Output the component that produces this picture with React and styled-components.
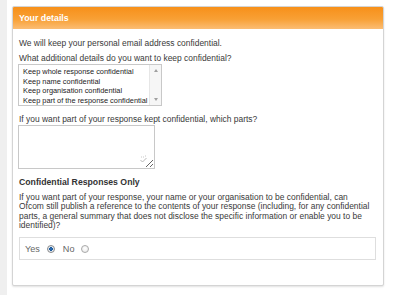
import React from 'react';
import styled, { createGlobalStyle } from 'styled-components';

const GlobalStyle = createGlobalStyle`
  html, body {
    margin: 0;
    padding: 0;
    background: #fff;
  }
  body {
    font-family: "Liberation Sans", Arial, sans-serif;
    color: #333;
  }
`;

const listOptions = [
  'Keep whole response confidential',
  'Keep name confidential',
  'Keep organisation confidential',
  'Keep part of the response confidential',
];

const App = () => {
  return (
    <>
      <GlobalStyle />
      <Page>
        <Panel>
          <PanelHeader>Your details</PanelHeader>
          <PanelBody>
            <Text>We will keep your personal email address confidential.</Text>
            <Text $mt={3}>What additional details do you want to keep confidential?</Text>
            <ListBox>
              <ListItems>
                {listOptions.map(opt => (
                  <ListItem key={opt}>{opt}</ListItem>
                ))}
              </ListItems>
              <ScrollTrack>
                <Arrow $up />
                <Arrow />
              </ScrollTrack>
            </ListBox>
            <Text $mt={7}>If you want part of your response kept confidential, which parts?</Text>
            <AreaWrap>
              <TextArea />
              <CheckIcon width="9" height="9" viewBox="0 0 9 9">
                <path d="M2 2h1M4 2h1M6 1h1" stroke="#c8c8c8" strokeWidth="1" />
                <path d="M1.5 5l2 2 4-4" fill="none" stroke="#b8b8b8" strokeWidth="1" />
              </CheckIcon>
            </AreaWrap>
            <Heading>Confidential Responses Only</Heading>
            <Paragraph>
              If you want part of your response, your name or your organisation to be confidential, can
              Ofcom still publish a reference to the contents of your response (including, for any confidential
              parts, a general summary that does not disclose the specific information or enable you to be
              identified)?
            </Paragraph>
            <RadioBox>
              <RadioLabel>Yes</RadioLabel>
              <Radio type="radio" name="publish" defaultChecked />
              <RadioLabel>No</RadioLabel>
              <Radio type="radio" name="publish" />
            </RadioBox>
          </PanelBody>
        </Panel>
      </Page>
    </>
  );
};

const Page = styled.div`
  box-sizing: border-box;
  width: 400px;
  height: 295px;
  border-left: 7px solid #efefef;
  padding: 6px 16px 0 5px;
`;

const Panel = styled.section`
  box-sizing: border-box;
  height: 280px;
  border: 1px solid #d4d4d4;
  border-radius: 2px;
  box-shadow: 0 1px 2px rgba(0, 0, 0, 0.12);
  background: #fff;
  overflow: hidden;
`;

const PanelHeader = styled.h2`
  margin: 0;
  height: 22px;
  line-height: 22px;
  padding-left: 6px;
  background: linear-gradient(to bottom, #f7901a 0%, #f8a035 55%, #fbbd74 100%);
  color: #fff;
  font-size: 8.8px;
  font-weight: bold;
`;

const PanelBody = styled.div`
  padding: 8px 7px 0 6px;
`;

const Text = styled.p`
  margin: ${p => p.$mt || 0}px 0 0;
  font-size: 8.45px;
  line-height: 12px;
  color: #3a3a3a;
`;

const ListBox = styled.div`
  display: flex;
  box-sizing: border-box;
  width: 144px;
  height: 42px;
  margin-left: -1px;
  border: 1px solid #c8c8c8;
  background: #fff;
`;

const ListItems = styled.ul`
  flex: 1;
  margin: 0;
  padding: 2px 0 0 4px;
  list-style: none;
`;

const ListItem = styled.li`
  font-size: 7.4px;
  line-height: 9.5px;
  color: #222;
  white-space: nowrap;
`;

const ScrollTrack = styled.div`
  width: 11px;
  display: flex;
  flex-direction: column;
  justify-content: space-between;
  align-items: center;
  padding: 4px 0;
  background: #f6f6f6;
  border-left: 1px solid #e6e6e6;
`;

const Arrow = styled.span`
  width: 0;
  height: 0;
  border-left: 2px solid transparent;
  border-right: 2px solid transparent;
  ${p => (p.$up ? 'border-bottom: 3px solid #a0a0a0;' : 'border-top: 3px solid #a0a0a0;')}
`;

const AreaWrap = styled.div`
  position: relative;
  width: 137px;
  height: 44px;
  margin-left: -1px;
`;

const TextArea = styled.textarea`
  display: block;
  box-sizing: border-box;
  width: 137px;
  height: 44px;
  margin: 0;
  padding: 2px;
  border: 1px solid #c8c8c8;
  border-radius: 0;
  font-family: inherit;
  font-size: 8.45px;
  resize: both;
  outline: none;
`;

const CheckIcon = styled.svg`
  position: absolute;
  right: 7px;
  bottom: 5px;
`;

const Heading = styled.h3`
  margin: 7px 0 0;
  font-size: 8.7px;
  line-height: 12px;
  font-weight: bold;
  color: #333;
`;

const Paragraph = styled.p`
  margin: 4.5px 0 0;
  padding-right: 3px;
  font-size: 8.45px;
  line-height: 9.6px;
  color: #3a3a3a;
`;

const RadioBox = styled.div`
  box-sizing: border-box;
  display: flex;
  align-items: center;
  height: 23px;
  margin-top: 6.5px;
  padding-left: 5px;
  border: 1px solid #dedede;
`;

const RadioLabel = styled.span`
  font-size: 9.1px;
  color: #666;
`;

const Radio = styled.input`
  appearance: none;
  box-sizing: border-box;
  width: 8px;
  height: 8px;
  margin: 0 8px 0 7px;
  border-radius: 50%;
  border: 1px solid #a9a9a9;
  background: radial-gradient(circle at 50% 40%, #fff 0%, #e6e6e6 100%);

  &:checked {
    border-color: #8c8c8c;
    background: radial-gradient(circle, #2d74c0 0%, #1d5b9c 38%, #e8eef5 48%, #d6dbe0 100%);
  }
`;

export default App;
